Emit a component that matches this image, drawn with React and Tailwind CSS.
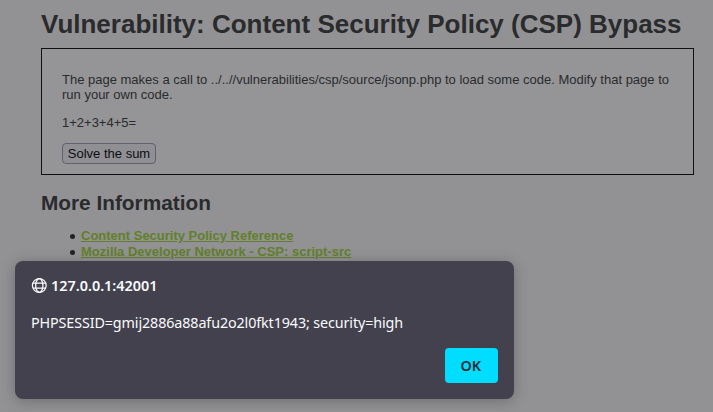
const links = [
  "Content Security Policy Reference",
  "Mozilla Developer Network - CSP: script-src",
];

function GlobeIcon() {
  return (
    <svg className="size-4 shrink-0" viewBox="0 0 16 16" fill="none" stroke="#fbfbfe" strokeWidth="1.25">
      <circle cx="8.3" cy="7.5" r="6.9" />
      <ellipse cx="8.3" cy="7.5" rx="3.6" ry="6.9" />
      <path d="M2 5h12.6M2 10h12.6" />
    </svg>
  );
}

function AlertDialog() {
  return (
    <div
      role="alertdialog"
      className="absolute left-[15px] top-[261px] flex h-[138px] w-[499px] flex-col rounded-lg bg-[#42414d] px-4 pt-4 pb-4 font-['Noto_Sans',sans-serif] text-[#fbfbfe] shadow-[0_2px_14px_rgba(58,57,68,0.4)]"
    >
      <div className="flex h-[17px] items-center gap-1 text-[15px] font-semibold leading-[17px]">
        <GlobeIcon />
        <span className="origin-left scale-x-[0.96] whitespace-nowrap">127.0.0.1:42001</span>
      </div>
      <p className="-ml-[0.5px] mt-5 origin-left scale-x-[0.955] whitespace-nowrap text-[15px] leading-[17px] tracking-[-0.12px]">
        PHPSESSID=gmij2886a88afu2o2l0fkt1943; security=high
      </p>
      <button className="mt-auto h-[35px] w-[53px] self-end rounded bg-[#00ddff] text-[15px] font-semibold leading-[35px] text-[#2b2a33]">
        <span className="-ml-px inline-block scale-x-[0.96]">OK</span>
      </button>
    </div>
  );
}

export default function App() {
  return (
    <div className="relative h-[412px] w-[713px] overflow-hidden bg-[#929294] font-['Liberation_Sans',Arial,sans-serif] text-[13px] leading-[15px] text-[#2a2b2d]">
      <main className="ml-[41px] w-[653px] pt-[9px]">
        <h1 className="whitespace-nowrap text-[26px] font-bold leading-[30px]">
          Vulnerability: Content Security Policy (CSP) Bypass
        </h1>
        <section className="mt-[9px] h-[127px] border border-[#101012] bg-[#959597] px-5 pt-[23px]">
          <p>
            The page makes a call to ../..//vulnerabilities/csp/source/jsonp.php to load some code. Modify that page to
            run your own code.
          </p>
          <p className="mt-[13px]">1+2+3+4+5=</p>
          <button className="mt-[13px] block h-[21px] w-[94px] rounded border border-[#62616e] bg-[#8f8f94] text-[13px] leading-[19px] text-[#0d0d12]">
            Solve the sum
          </button>
        </section>
        <h2 className="mt-4 text-[20.8px] font-bold leading-6">More Information</h2>
        <ul className="mt-[13px] pl-7 font-bold leading-4">
          {links.map((label) => (
            <li key={label} className="flex items-center gap-[6px]">
              <span className="ml-px size-[5px] rounded-full bg-[#222224]" />
              <a className="text-[#628029] underline">{label}</a>
            </li>
          ))}
        </ul>
      </main>
      <AlertDialog />
    </div>
  );
}
